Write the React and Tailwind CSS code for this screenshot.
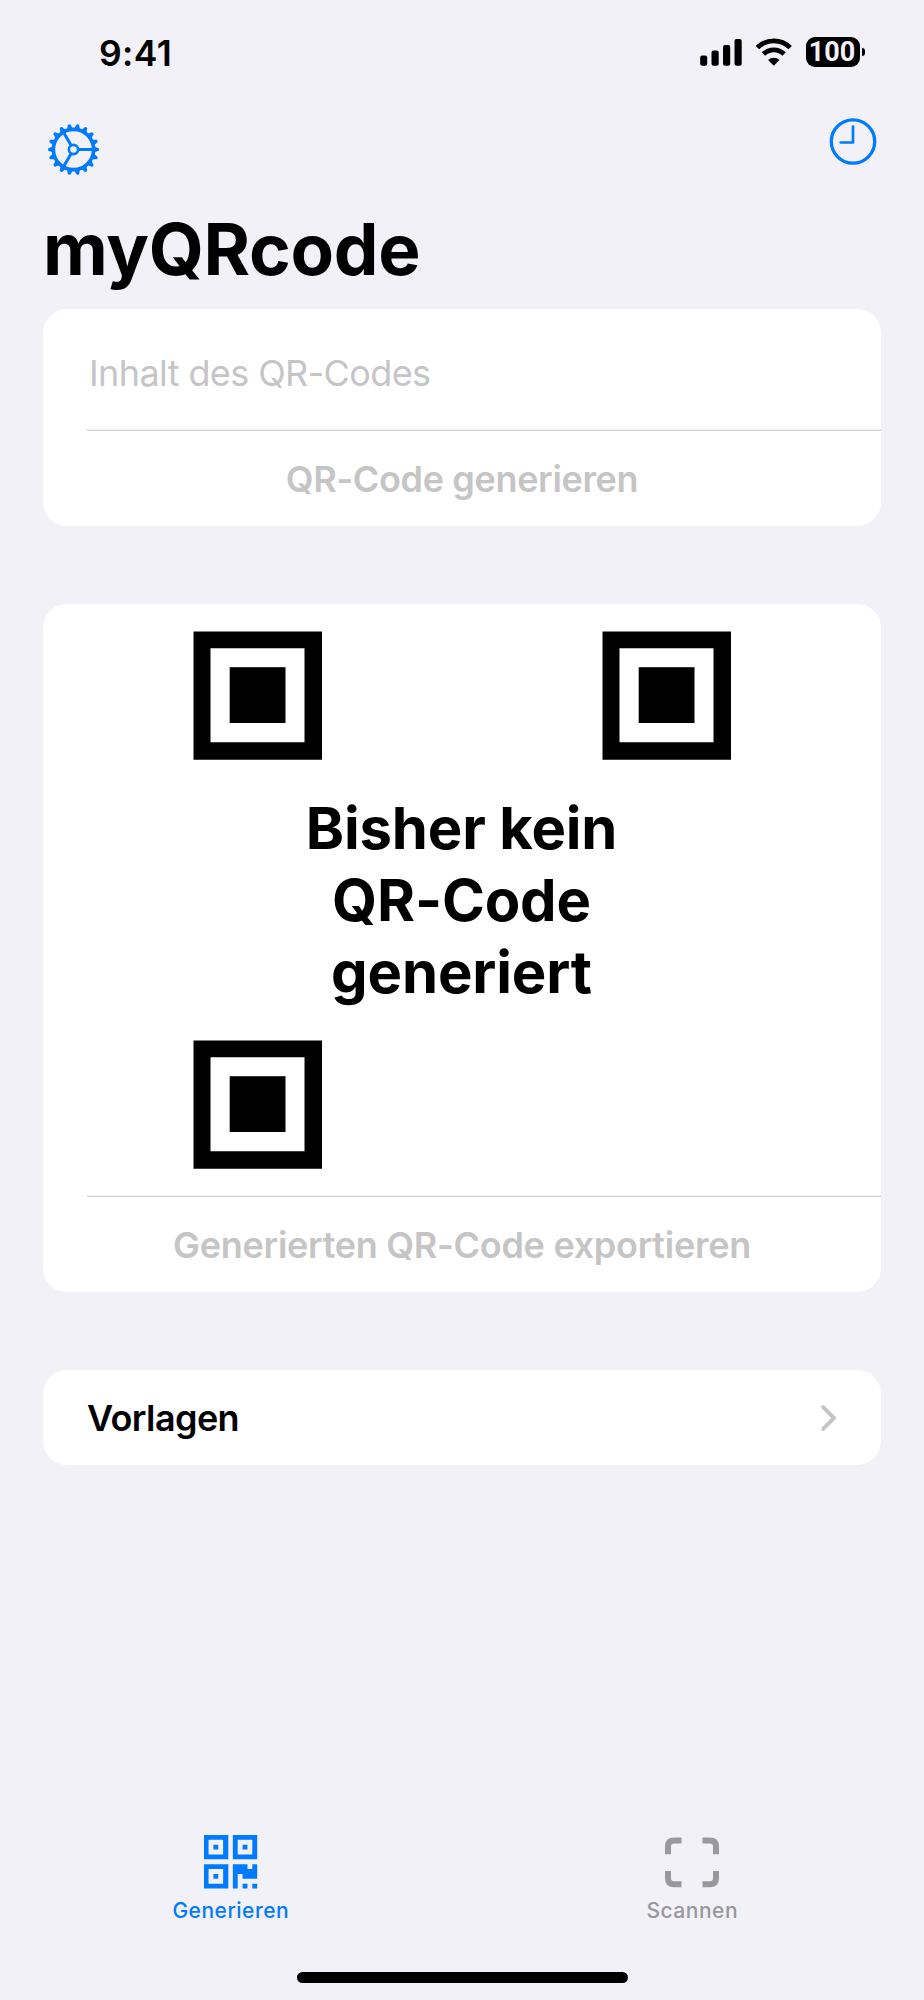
const TEETH = Array.from({ length: 18 }, (_, i) => i * 20);
const SPOKES = [0, 120, 240];

const SignalIcon = () => (
  <svg width="44" height="30" viewBox="0.8 0 44 30">
    <rect x="1" y="18.5" width="7" height="10.3" rx="2" />
    <rect x="12.3" y="13.5" width="7.2" height="15.3" rx="2" />
    <rect x="23.8" y="8" width="7.2" height="20.8" rx="2" />
    <rect x="35.3" y="2" width="7.2" height="26.8" rx="2" />
  </svg>
);

const WifiIcon = () => (
  <svg width="38" height="30" viewBox="1.2 0 38 30">
    <g fill="none" stroke="black" strokeWidth="4.8">
      <path d="M2.6 10.6 A23.4 23.4 0 0 1 35.4 10.6" />
      <path d="M8.7 17 A14.7 14.7 0 0 1 29.3 17" />
    </g>
    <path d="M19 28.8 L13.3 22.9 A8.3 8.3 0 0 1 24.7 22.9 Z" />
  </svg>
);

const Battery = () => (
  <div className="flex items-center gap-[2px]">
    <div className="flex h-[30px] w-[54px] items-center justify-center rounded-[9px] bg-black pr-[2px] font-['Roboto',sans-serif] text-[27px] leading-none font-bold text-[#f2f1f7]">
      100
    </div>
    <div className="h-[8px] w-[3px] rounded-r-full bg-black" />
  </div>
);

const GearIcon = () => (
  <svg width="53" height="53" viewBox="-26.5 -26.5 53 53" fill="none" stroke="#007aff">
    <circle r="20.1" strokeWidth="3.6" />
    <circle r="4.6" strokeWidth="2.6" />
    {SPOKES.map((angle) => (
      <path key={angle} d="M5.5 0 H20" strokeWidth="3" transform={`rotate(${angle})`} />
    ))}
    {TEETH.map((angle) => (
      <path
        key={angle}
        d="M21 -2.8 L25.1 -1.3 Q26.3 0 25.1 1.3 L21 2.8 Z"
        fill="#007aff"
        stroke="none"
        transform={`rotate(${angle})`}
      />
    ))}
  </svg>
);

const ClockIcon = () => (
  <svg width="48" height="49" viewBox="0 0 48 49" fill="none" stroke="#007aff" strokeLinecap="round" strokeLinejoin="round">
    <circle cx="24" cy="24.5" r="21.7" strokeWidth="3.3" />
    <path d="M24 9.6 V25.5 H11.7" strokeWidth="2.7" />
  </svg>
);

const Finder = () => (
  <svg width="129" height="129" viewBox="0 0 129 129">
    <path fillRule="evenodd" d="M.5 .5 H129 V128.7 H.5 Z M17.5 17.2 V111.2 H111.5 V17.2 Z" />
    <rect x="36.7" y="36.2" width="55.8" height="55.8" />
  </svg>
);

const QrIcon = () => (
  <svg width="54" height="54" viewBox="0.07 0 11.1 11.1" fill="#007aff">
    <path fillRule="evenodd" d="M.07 0h5v5h-5z M1 1v3h3v-3z M6 0h5v5h-5z M7 1v3h3v-3z M.07 6h5v5h-5z M1 7v3h3v-3z" />
    <path d="M2 2h1v1h-1z M8 2h1v1h-1z M2 8h1v1h-1z" />
    <path d="M6 6h3v1h1v-1h1v3h-3v-1h-1v3h-1z M8 10h1v1h-1z M10 10h1v1h-1z" />
  </svg>
);

const ScanIcon = () => (
  <svg width="54" height="51" viewBox="0 0 54 51" fill="none" stroke="#98989d" strokeWidth="6">
    <path d="M3 17.3 V9.5 Q3 3.5 9 3.5 H16.5" />
    <path d="M37.5 3.5 H45 Q51 3.5 51 9.5 V17.3" />
    <path d="M3 34 V41.3 Q3 47.3 9 47.3 H16.5" />
    <path d="M37.5 47.3 H45 Q51 47.3 51 41.3 V34" />
  </svg>
);

const Separator = () => <div className="ml-[43.5px] h-[2px] border-t border-[#f0f0f2] bg-[#d3d3d5]" />;

const tabs = [
  { label: 'Generieren', icon: QrIcon, color: 'text-[#007aff]' },
  { label: 'Scannen', icon: ScanIcon, color: 'text-[#98989d]' },
];

const App = () => {
  return (
    <div className="flex h-[2000px] w-[924px] flex-col bg-[#f2f1f7] font-['Inter',sans-serif] text-black">
      {/* Status bar */}
      <header className="flex h-[104px] items-center justify-between pr-[59px] pl-[99px]">
        <span className="mt-[3px] text-[35.5px] leading-none font-semibold tracking-[0.4px]">9:41</span>
        <div className="flex items-center gap-[12px]">
          <SignalIcon />
          <WifiIcon />
          <Battery />
        </div>
      </header>

      {/* Toolbar */}
      <div className="flex h-[105px] items-start justify-between pr-[47px] pl-[47px]">
        <button className="mt-[19px]">
          <GearIcon />
        </button>
        <button className="mt-[13px]">
          <ClockIcon />
        </button>
      </div>

      <h1 className="flex h-[100px] items-start pt-[5px] pl-[43px] text-[71px] leading-none font-bold tracking-[-0.3px]">
        myQRcode
      </h1>

      <main className="flex flex-col gap-[78px] px-[43px]">
        {/* Content input */}
        <section className="h-[217px] overflow-hidden rounded-[24px] bg-white">
          <div className="flex h-[120px] items-center pt-[7px] pl-[46px] text-[36px] tracking-[-0.6px] text-[#c5c5c7]">
            Inhalt des QR-Codes
          </div>
          <Separator />
          <button className="h-[95px] w-full text-[36px] font-semibold tracking-[-0.35px] text-[#c5c5c5]">
            QR-Code generieren
          </button>
        </section>

        {/* Preview of the generated code */}
        <section className="h-[688px] overflow-hidden rounded-[24px] bg-white">
          <div className="flex h-[591px] flex-col items-center pt-[27px]">
            <div className="flex w-[538px] justify-between">
              <Finder />
              <Finder />
            </div>
            <p className="flex h-[280px] w-[340px] items-center justify-center pr-[1px] text-center text-[58px] leading-[72px] font-bold tracking-[-0.15px]">
              Bisher kein QR-Code generiert
            </p>
            <div className="flex w-[538px]">
              <Finder />
            </div>
          </div>
          <Separator />
          <button className="h-[95px] w-full text-[36px] font-semibold tracking-[-0.28px] text-[#c5c5c5]">
            Generierten QR-Code exportieren
          </button>
        </section>

        <section className="flex h-[95px] items-center justify-between rounded-[24px] bg-white pr-[44px] pl-[44px]">
          <span className="text-[36px] font-semibold tracking-[-0.6px]">Vorlagen</span>
          <svg width="18" height="28" viewBox="0 0 18 28" fill="none" stroke="#c5c5c7" strokeWidth="4" strokeLinecap="round" strokeLinejoin="round">
            <path d="M4.2 3.2 L15 14 L4.2 24.8" />
          </svg>
        </section>
      </main>

      {/* Tab bar */}
      <nav className="mt-auto flex h-[137px] pr-[1px]">
        {tabs.map(({ label, icon: Icon, color }) => (
          <button key={label} className={`flex flex-1 flex-col items-center ${color}`}>
            <span className="flex h-[54px] items-center">
              <Icon />
            </span>
            <span className="mt-[8px] text-[21px] leading-[28px] font-medium tracking-[0.5px]">{label}</span>
          </button>
        ))}
      </nav>
      <div className="mb-[17px] ml-[297px] h-[11px] w-[331px] rounded-full bg-black" />
    </div>
  );
};

export default App;
